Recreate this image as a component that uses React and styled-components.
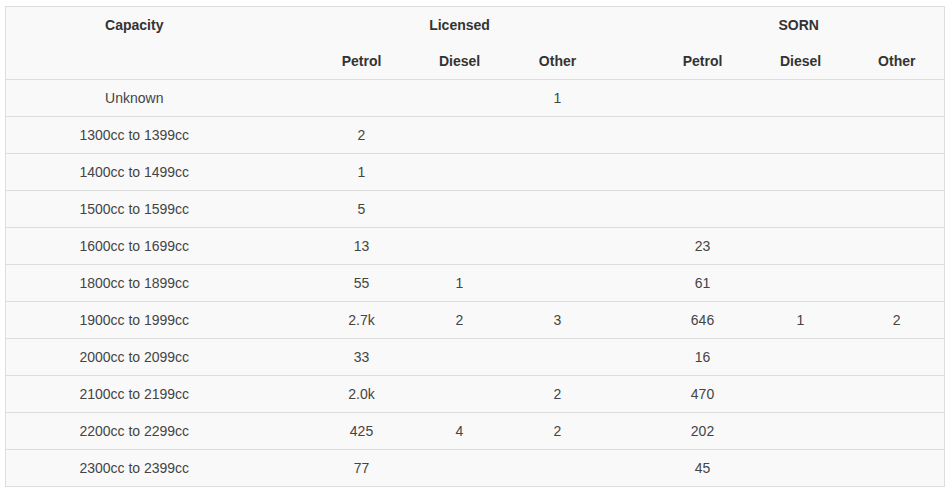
import styled, { createGlobalStyle } from 'styled-components'

const GlobalStyle = createGlobalStyle`
  body {
    margin: 0;
    background: #ffffff;
    font-family: "Liberation Sans", Arial, sans-serif;
  }
`

const rows = [
  { label: 'Unknown', values: ['', '', '1', '', '', ''] },
  { label: '1300cc to 1399cc', values: ['2', '', '', '', '', ''] },
  { label: '1400cc to 1499cc', values: ['1', '', '', '', '', ''] },
  { label: '1500cc to 1599cc', values: ['5', '', '', '', '', ''] },
  { label: '1600cc to 1699cc', values: ['13', '', '', '23', '', ''] },
  { label: '1800cc to 1899cc', values: ['55', '1', '', '61', '', ''] },
  { label: '1900cc to 1999cc', values: ['2.7k', '2', '3', '646', '1', '2'] },
  { label: '2000cc to 2099cc', values: ['33', '', '', '16', '', ''] },
  { label: '2100cc to 2199cc', values: ['2.0k', '', '2', '470', '', ''] },
  { label: '2200cc to 2299cc', values: ['425', '4', '2', '202', '', ''] },
  { label: '2300cc to 2399cc', values: ['77', '', '', '45', '', ''] },
]

const fuels = ['Petrol', 'Diesel', 'Other']

export default function App() {
  return (
    <Page>
      <GlobalStyle />
      <Table>
        <colgroup>
          <col style={{ width: 257 }} />
          <col style={{ width: 50 }} />
          <col style={{ width: 98 }} />
          <col style={{ width: 98 }} />
          <col style={{ width: 98 }} />
          <col style={{ width: 47 }} />
          <col style={{ width: 98 }} />
          <col style={{ width: 98 }} />
          <col style={{ width: 95 }} />
        </colgroup>
        <thead>
          <HeadRow>
            <HeadCell rowSpan={2} $top>Capacity</HeadCell>
            <HeadCell />
            <HeadCell colSpan={3}>Licensed</HeadCell>
            <HeadCell />
            <HeadCell colSpan={3}>SORN</HeadCell>
          </HeadRow>
          <HeadRow $last>
            <HeadCell />
            {fuels.map((f) => (
              <HeadCell key={'l' + f}>{f}</HeadCell>
            ))}
            <HeadCell />
            {fuels.map((f) => (
              <HeadCell key={'s' + f}>{f}</HeadCell>
            ))}
          </HeadRow>
        </thead>
        <tbody>
          {rows.map((row) => (
            <BodyRow key={row.label}>
              <Cell>{row.label}</Cell>
              <Cell />
              {row.values.slice(0, 3).map((v, i) => (
                <Cell key={'l' + i}>{v}</Cell>
              ))}
              <Cell />
              {row.values.slice(3).map((v, i) => (
                <Cell key={'s' + i}>{v}</Cell>
              ))}
            </BodyRow>
          ))}
        </tbody>
      </Table>
    </Page>
  )
}

const Page = styled.div`
  padding: 6px 5px;
`

const Table = styled.table`
  width: 939px;
  table-layout: fixed;
  border-collapse: collapse;
  background-color: #f9f9f9;
  border: 1px solid #dddddd;
  font-size: 14px;
  color: #333333;
`

const HeadRow = styled.tr`
  border-bottom: ${(p) => (p.$last ? '1px solid #dddddd' : 'none')};
`

const HeadCell = styled.th`
  padding: 8px;
  line-height: 20px;
  height: 36px;
  box-sizing: border-box;
  font-weight: bold;
  text-align: center;
  vertical-align: ${(p) => (p.$top ? 'top' : 'middle')};
  color: #333333;
`

const BodyRow = styled.tr`
  border-top: 1px solid #dddddd;
`

const Cell = styled.td`
  padding: 8px;
  line-height: 20px;
  text-align: center;
  color: #444444;
`
